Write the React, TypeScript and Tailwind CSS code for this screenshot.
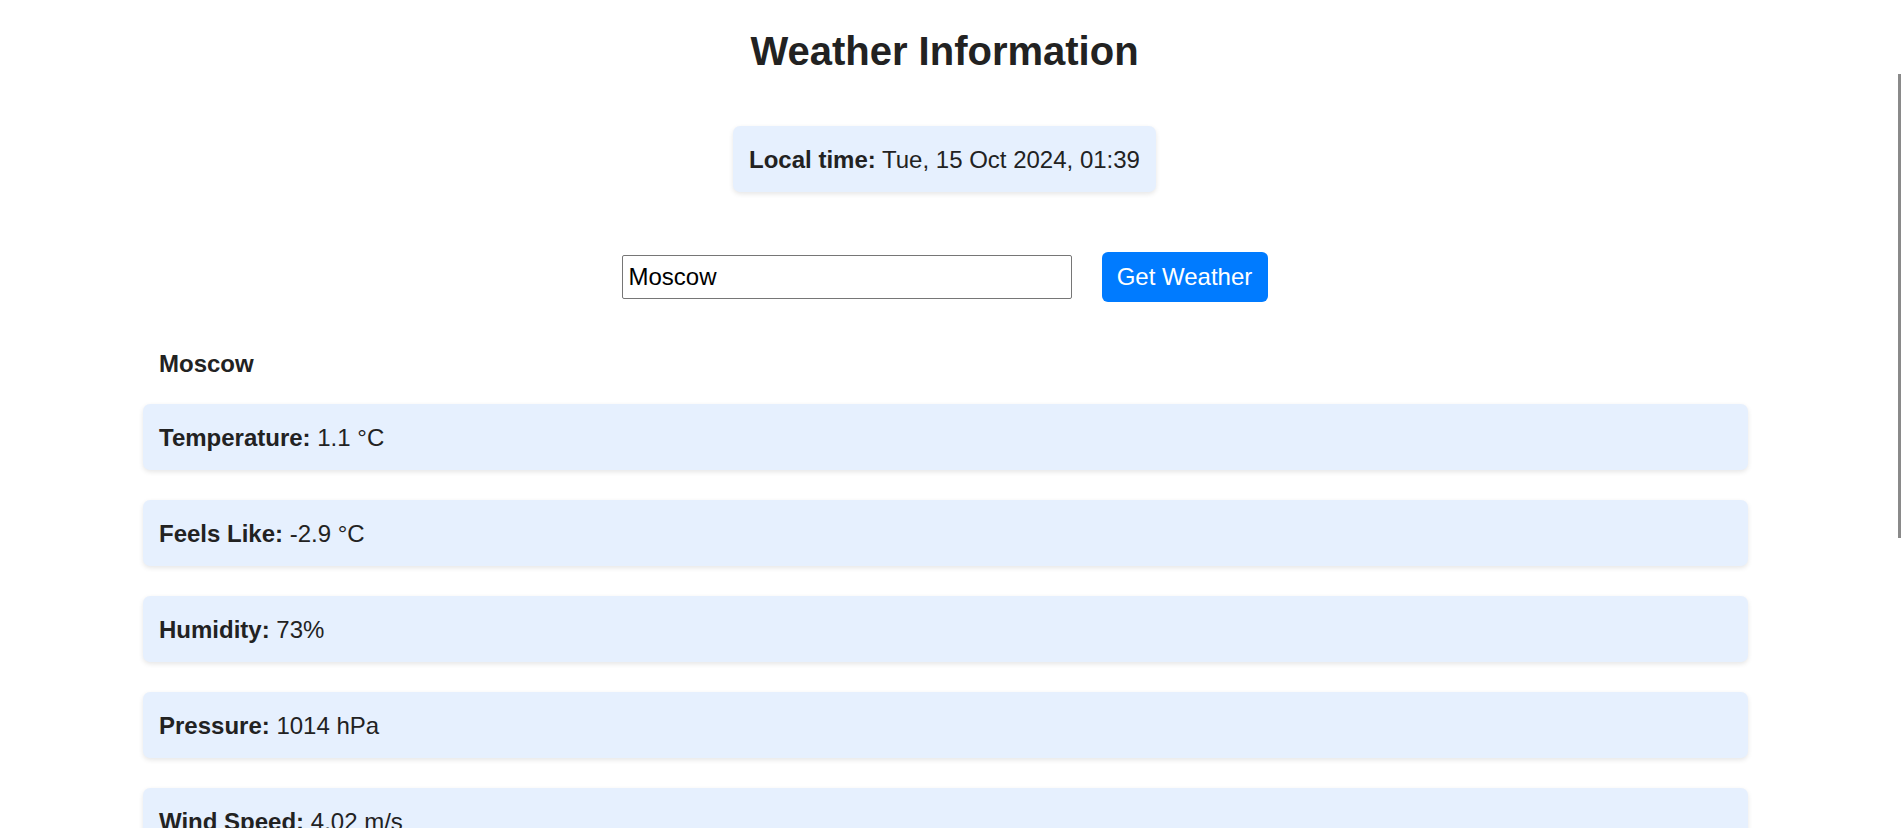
import React, { useState } from "react";

interface Row {
    label: string;
    value: string;
}

const rows: Row[] = [
    { label: "Temperature:", value: "1.1 °C" },
    { label: "Feels Like:", value: "-2.9 °C" },
    { label: "Humidity:", value: "73%" },
    { label: "Pressure:", value: "1014 hPa" },
    { label: "Wind Speed:", value: "4.02 m/s" },
    { label: "Description:", value: "overcast clouds" },
];

const InfoCard: React.FC<Row> = ({ label, value }) => (
    <div className="flex h-[66px] items-center rounded-[7px] bg-[#e6f0fe] px-4 shadow-[0_2px_5px_rgba(0,0,0,0.1)]">
        <p className="text-[24px] leading-[27px] text-[#222]">
            <span className="font-bold">{label}</span> {value}
        </p>
    </div>
);

export default function App() {
    const [city, setCity] = useState("Moscow");

    return (
        <div className="flex h-screen overflow-hidden bg-white font-['Liberation_Sans',Arial,sans-serif] text-[#222]">
            <main className="flex-1 pt-[28px]">
                <h1 className="text-center text-[40px] leading-[46px] font-bold text-[#222]">Weather Information</h1>

                <div className="mt-[52px] flex justify-center">
                    <div className="flex h-[66px] items-center rounded-[7px] bg-[#e6f0fe] px-4 shadow-[0_2px_5px_rgba(0,0,0,0.1)]">
                        <p className="text-[24px] leading-[27px]">
                            <span className="font-bold">Local time:</span> Tue, 15 Oct 2024, 01:39
                        </p>
                    </div>
                </div>

                <div className="mt-[60px] flex items-center justify-center gap-[30px]">
                    <input
                        value={city}
                        onChange={(e) => setCity(e.target.value)}
                        className="h-[44px] w-[450px] rounded-[2px] border border-[#767676] bg-white px-[6px] text-[24px] text-black outline-none"
                    />
                    <button className="h-[50px] w-[166px] rounded-[6px] bg-[#007bff] text-[24px] text-white">Get Weather</button>
                </div>

                <div className="mx-auto mt-[48px] w-[1605px] translate-x-[1px]">
                    <h2 className="px-4 text-[24px] leading-[27px] font-bold">Moscow</h2>
                    <div className="mt-[27px] flex flex-col gap-[30px]">
                        {rows.map((r) => (
                            <InfoCard key={r.label} label={r.label} value={r.value} />
                        ))}
                    </div>
                </div>
            </main>

            {/* scrollbar strip */}
            <div className="w-[15px] shrink-0 bg-white">
                <div className="mt-[74px] ml-[9px] h-[464px] w-[3px] bg-[#8a8a8a]" />
            </div>
        </div>
    );
}
